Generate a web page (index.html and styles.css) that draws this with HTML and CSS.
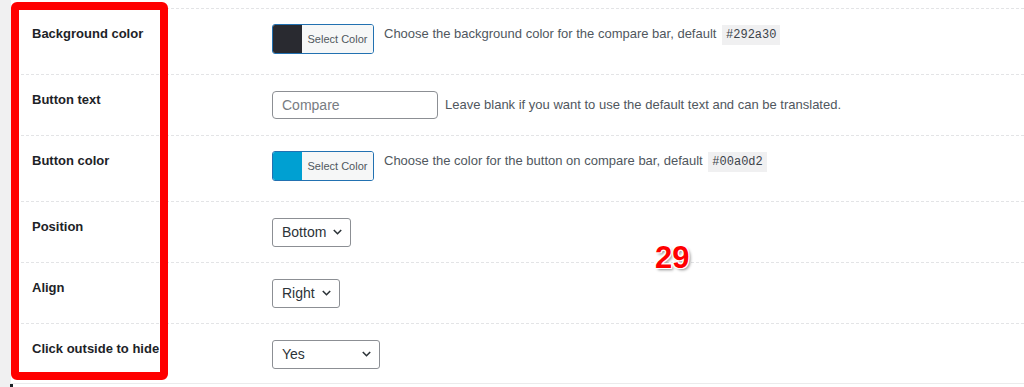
FILE: index.html
```html
<!DOCTYPE html>
<html>
<head>
<meta charset="utf-8">
<link rel="stylesheet" href="styles.css">
</head>
<body>
<div class="page">
  <div class="panel">
    <div class="row row-picker">
      <div class="label">Background color</div>
      <div class="field field-top">
        <span class="picker"><span class="swatch swatch-dark"></span><span class="picker-text">Select Color</span></span>
        <span class="desc desc-picker">Choose the background color for the compare bar, default <code>#292a30</code></span>
      </div>
    </div>
    <div class="row">
      <div class="label">Button text</div>
      <div class="field">
        <input class="text-input" type="text" placeholder="Compare">
        <span class="desc desc-input">Leave blank if you want to use the default text and can be translated.</span>
      </div>
    </div>
    <div class="row row-picker">
      <div class="label">Button color</div>
      <div class="field field-top">
        <span class="picker"><span class="swatch swatch-blue"></span><span class="picker-text">Select Color</span></span>
        <span class="desc desc-picker">Choose the color for the button on compare bar, default <code>#00a0d2</code></span>
      </div>
    </div>
    <div class="row">
      <div class="label">Position</div>
      <div class="field">
        <span class="select"><span>Bottom</span><svg class="chev" width="9" height="6" viewBox="0 0 9 6"><path d="M0.8 1 L4.5 4.7 L8.2 1" fill="none" stroke="#2c3338" stroke-width="1.6"/></svg></span>
      </div>
    </div>
    <div class="row">
      <div class="label">Align</div>
      <div class="field">
        <span class="select"><span>Right</span><svg class="chev" width="9" height="6" viewBox="0 0 9 6"><path d="M0.8 1 L4.5 4.7 L8.2 1" fill="none" stroke="#2c3338" stroke-width="1.6"/></svg></span>
      </div>
    </div>
    <div class="row row-last">
      <div class="label">Click outside to hide</div>
      <div class="field">
        <span class="select select-wide"><span>Yes</span><svg class="chev" width="9" height="6" viewBox="0 0 9 6"><path d="M0.8 1 L4.5 4.7 L8.2 1" fill="none" stroke="#2c3338" stroke-width="1.6"/></svg></span>
      </div>
    </div>
  </div>
  <div class="foot"></div>
  <div class="highlight"></div>
  <div class="badge">29</div>
</div>
</body>
</html>
```

FILE: styles.css
```css
html, body {
  margin: 0;
  padding: 0;
}
body {
  background: #f0f0f1;
  font-family: "Liberation Sans", Arial, sans-serif;
  color: #1d2327;
  overflow: hidden;
}
.page {
  position: relative;
  width: 1024px;
  height: 387px;
}
.panel {
  margin-left: 11px;
  background: #fff;
  padding-top: 8px;
}
.row {
  display: grid;
  grid-template-columns: 240px 1fr;
  border-top: 1px dashed #e3e4e6;
  padding: 15px 0 15px 21px;
}
.row-picker {
  padding-bottom: 20px;
}
.row-last {
  padding-bottom: 14px;
  border-bottom: 1px solid #ebebec;
}
.label {
  font-size: 13px;
  font-weight: 700;
  line-height: 20px;
  color: #1d2327;
  white-space: nowrap;
}
.field {
  display: flex;
  align-items: center;
  height: 30px;
}
.field-top {
  align-items: flex-start;
}
.picker {
  display: flex;
  box-sizing: border-box;
  width: 102px;
  height: 30px;
  border: 1px solid #2271b1;
  border-radius: 3px;
  overflow: hidden;
}
.swatch {
  width: 29px;
  height: 100%;
}
.swatch-dark {
  background: #292a30;
}
.swatch-blue {
  background: #00a0d2;
}
.picker-text {
  flex: 1;
  background: #f6f7f7;
  font-size: 11px;
  line-height: 28px;
  text-align: center;
  color: #50575e;
}
.desc {
  font-size: 13px;
  line-height: 18px;
  color: #50575e;
  white-space: nowrap;
}
.desc-picker {
  margin-left: 10px;
  line-height: 20px;
}
.desc-input {
  margin-left: 7px;
}
code {
  font-family: "Liberation Mono", "Courier New", monospace;
  font-size: 12px;
  background: #f0f0f1;
  color: #3c434a;
  padding: 3px 4px;
  margin-left: 2px;
}
.text-input {
  box-sizing: border-box;
  width: 166px;
  height: 28px;
  margin: 0;
  border: 1px solid #8c8f94;
  border-radius: 4px;
  padding: 0 9px;
  font-family: "Liberation Sans", Arial, sans-serif;
  font-size: 14px;
  color: #2c3338;
  background: #fff;
}
.text-input::placeholder {
  color: #787c82;
}
.select {
  display: inline-flex;
  align-items: center;
  gap: 7px;
  box-sizing: border-box;
  height: 29px;
  border: 1px solid #8c8f94;
  border-radius: 3px;
  padding: 0 8px 0 9px;
  font-size: 14px;
  color: #2c3338;
  background: #fff;
}
.select-wide {
  width: 108px;
  justify-content: space-between;
}
.chev {
  display: block;
}
.foot {
  margin-left: 10px;
  height: 4px;
  background: #fff;
  border-left: 3px solid #1d2327;
}
.highlight {
  position: absolute;
  left: 11px;
  top: 2px;
  width: 157px;
  height: 378px;
  box-sizing: border-box;
  border: 8px solid #ff0000;
  border-radius: 6px;
}
.badge {
  position: absolute;
  left: 655px;
  top: 242px;
  font-family: "Liberation Sans", Arial, sans-serif;
  font-weight: 700;
  font-size: 31px;
  line-height: 31px;
  color: #ff0000;
  text-shadow: -1px -1px 0 #fff, 1px -1px 0 #fff, -1px 1px 0 #fff, 1px 1px 0 #fff, 2px 2px 3px rgba(0,0,0,0.45);
}
```
